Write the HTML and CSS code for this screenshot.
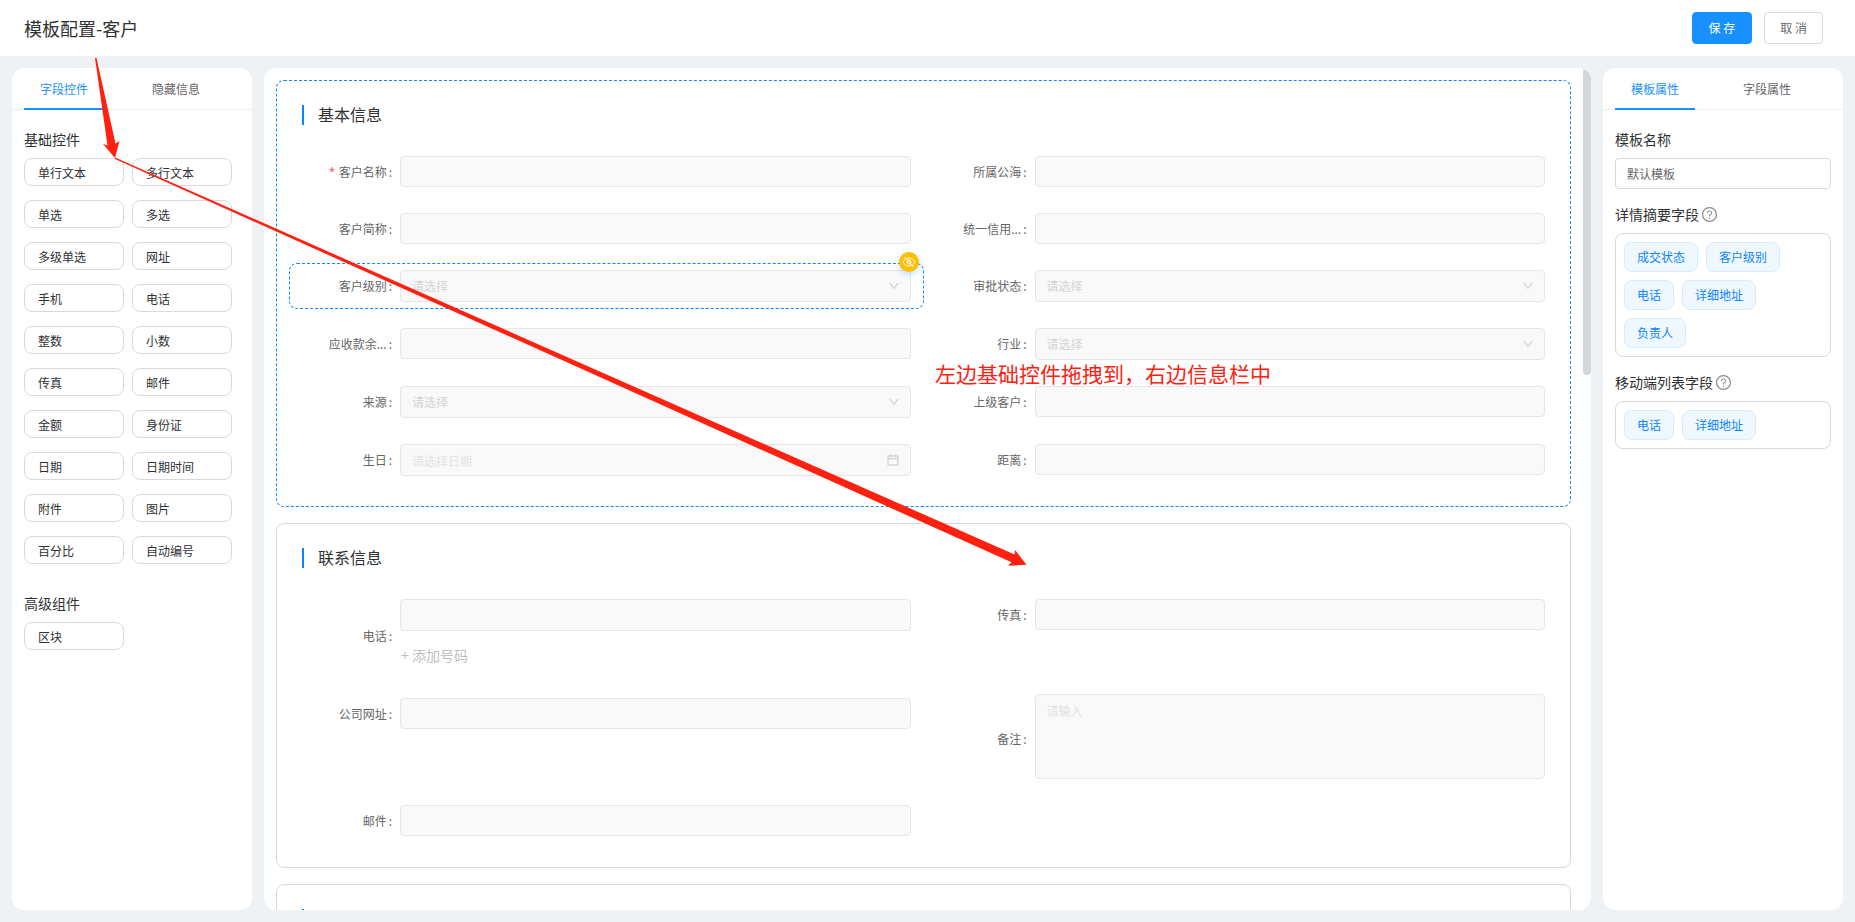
FILE: index.html
```html
<!DOCTYPE html>
<html lang="zh-CN">
<head>
<meta charset="utf-8">
<title>模板配置-客户</title>
<link rel="stylesheet" href="styles.css">
</head>
<body>
<svg class="defs" aria-hidden="true">
  <symbol id="down" viewBox="0 0 1024 1024"><path d="M884 256h-75c-5.1 0-9.9 2.5-12.9 6.6L512 654.2 227.9 262.6c-3-4.1-7.8-6.6-12.9-6.6h-75c-6.5 0-10.3 7.4-6.5 12.7l352.6 486.1c12.8 17.6 39 17.6 51.7 0l352.6-486.1c3.9-5.3.1-12.7-6.4-12.7z"/></symbol>
  <symbol id="calendar" viewBox="0 0 1024 1024"><path d="M880 184H712v-64c0-4.4-3.6-8-8-8h-56c-4.4 0-8 3.6-8 8v64H384v-64c0-4.4-3.6-8-8-8h-56c-4.4 0-8 3.6-8 8v64H144c-17.7 0-32 14.3-32 32v664c0 17.7 14.3 32 32 32h736c17.7 0 32-14.3 32-32V216c0-17.7-14.3-32-32-32zm-40 656H184V460h656v380zM184 392V256h128v48c0 4.4 3.6 8 8 8h56c4.4 0 8-3.6 8-8v-48h256v48c0 4.4 3.6 8 8 8h56c4.4 0 8-3.6 8-8v-48h128v136H184z"/></symbol>
  <symbol id="help" viewBox="64 64 896 896"><path d="M512 64C264.600 64 64 264.600 64 512s200.600 448 448 448 448-200.600 448-448S759.400 64 512 64zm0 820c-205.400 0-372-166.600-372-372s166.600-372 372-372 372 166.600 372 372-166.600 372-372 372z"/><path d="M623.6 316.700C593.600 290.400 554 276 512 276s-81.600 14.500-111.600 40.700C369.200 344 352 380.700 352 420v7.600c0 4.400 3.600 8 8 8h48c4.400 0 8-3.600 8-8V420c0-44.100 43.100-80 96-80s96 35.900 96 80c0 31.100-22 59.600-56.100 72.700-21.200 8.100-39.200 22.300-52.100 40.900-13.100 19-19.900 41.800-19.900 64.900V620c0 4.400 3.600 8 8 8h48c4.400 0 8-3.600 8-8v-22.700a48.300 48.300 0 0130.900-44.800c59-22.700 97.100-74.700 97.100-132.500.1-39.300-17.100-76-48.300-103.300zM472 732a40 40 0 1080 0 40 40 0 10-80 0z"/></symbol>
</svg>

<header class="topbar">
  <h1 class="page-title">模板配置-客户</h1>
  <div class="actions">
    <button type="button" class="btn btn-primary">保 存</button>
    <button type="button" class="btn">取 消</button>
  </div>
</header>

<main class="workspace">
  <aside class="panel side">
    <div class="tabs" role="tablist">
      <button type="button" class="tab active" role="tab" aria-selected="true">字段控件</button>
      <button type="button" class="tab" role="tab" aria-selected="false">隐藏信息</button>
    </div>
    <div class="side-body">
      <h2 class="side-title">基础控件</h2>
      <div class="chips">
        <button type="button" class="chip">单行文本</button><button type="button" class="chip">多行文本</button>
        <button type="button" class="chip">单选</button><button type="button" class="chip">多选</button>
        <button type="button" class="chip">多级单选</button><button type="button" class="chip">网址</button>
        <button type="button" class="chip">手机</button><button type="button" class="chip">电话</button>
        <button type="button" class="chip">整数</button><button type="button" class="chip">小数</button>
        <button type="button" class="chip">传真</button><button type="button" class="chip">邮件</button>
        <button type="button" class="chip">金额</button><button type="button" class="chip">身份证</button>
        <button type="button" class="chip">日期</button><button type="button" class="chip">日期时间</button>
        <button type="button" class="chip">附件</button><button type="button" class="chip">图片</button>
        <button type="button" class="chip">百分比</button><button type="button" class="chip">自动编号</button>
      </div>
      <h2 class="side-title advanced">高级组件</h2>
      <div class="chips">
        <button type="button" class="chip">区块</button>
      </div>
    </div>
  </aside>

  <section class="panel canvas">
    <div class="canvas-scroll">
      <section class="block selected">
        <h2 class="block-title">基本信息</h2>
        <div class="fields">
          <div class="field"><label class="label" for="f1"><span class="req">*</span>客户名称<span class="colon">:</span></label><div class="control"><input id="f1" class="input" type="text" disabled></div></div>
          <div class="field"><label class="label" for="f2">所属公海<span class="colon">:</span></label><div class="control"><input id="f2" class="input" type="text" disabled></div></div>
          <div class="field"><label class="label" for="f3">客户简称<span class="colon">:</span></label><div class="control"><input id="f3" class="input" type="text" disabled></div></div>
          <div class="field"><label class="label" for="f4">统一信用...<span class="colon">:</span></label><div class="control"><input id="f4" class="input" type="text" disabled></div></div>
          <div class="field current"><label class="label" for="f5">客户级别<span class="colon">:</span></label><div class="control"><select id="f5" class="input select" disabled><option>请选择</option></select><svg class="suffix"><use href="#down"/></svg></div>
            <span class="badge"><svg viewBox="0 0 14 14"><path d="M1 7C2.300 4.400 4.400 3 7 3s4.700 1.400 6 4c-1.300 2.600-3.400 4-6 4S2.300 9.600 1 7z"/><circle cx="7" cy="7" r="2"/><path d="M2.300 1.800 11.700 12.200"/></svg></span>
          </div>
          <div class="field"><label class="label" for="f6">审批状态<span class="colon">:</span></label><div class="control"><select id="f6" class="input select" disabled><option>请选择</option></select><svg class="suffix"><use href="#down"/></svg></div></div>
          <div class="field"><label class="label" for="f7">应收款余...<span class="colon">:</span></label><div class="control"><input id="f7" class="input" type="text" disabled></div></div>
          <div class="field"><label class="label" for="f8">行业<span class="colon">:</span></label><div class="control"><select id="f8" class="input select" disabled><option>请选择</option></select><svg class="suffix"><use href="#down"/></svg></div></div>
          <div class="field"><label class="label" for="f9">来源<span class="colon">:</span></label><div class="control"><select id="f9" class="input select" disabled><option>请选择</option></select><svg class="suffix"><use href="#down"/></svg></div></div>
          <div class="field"><label class="label" for="f10">上级客户<span class="colon">:</span></label><div class="control"><input id="f10" class="input" type="text" disabled></div></div>
          <div class="field"><label class="label" for="f11">生日<span class="colon">:</span></label><div class="control"><input id="f11" class="input tall" type="text" placeholder="请选择日期" disabled><svg class="suffix date"><use href="#calendar"/></svg></div></div>
          <div class="field"><label class="label" for="f12">距离<span class="colon">:</span></label><div class="control"><input id="f12" class="input" type="text" disabled></div></div>
        </div>
      </section>

      <section class="block">
        <h2 class="block-title">联系信息</h2>
        <div class="fields">
          <div class="field"><label class="label" for="g1">电话<span class="colon">:</span></label><div class="control"><input id="g1" class="input tall" type="text" disabled><button type="button" class="add">+ 添加号码</button></div></div>
          <div class="field"><label class="label" for="g2">传真<span class="colon">:</span></label><div class="control"><input id="g2" class="input" type="text" disabled></div></div>
          <div class="field"><label class="label" for="g3">公司网址<span class="colon">:</span></label><div class="control"><input id="g3" class="input" type="text" disabled></div></div>
          <div class="field"><label class="label" for="g4">备注<span class="colon">:</span></label><div class="control"><textarea id="g4" class="input area" placeholder="请输入" disabled></textarea></div></div>
          <div class="field"><label class="label" for="g5">邮件<span class="colon">:</span></label><div class="control"><input id="g5" class="input" type="text" disabled></div></div>
        </div>
      </section>

      <section class="block">
        <div class="block-title"></div>
      </section>
    </div>
    <div class="scrollbar"><div class="thumb"></div></div>
  </section>

  <aside class="panel side">
    <div class="tabs" role="tablist">
      <button type="button" class="tab active" role="tab" aria-selected="true">模板属性</button>
      <button type="button" class="tab" role="tab" aria-selected="false">字段属性</button>
    </div>
    <div class="side-body">
      <label class="side-title" for="tpl">模板名称</label>
      <input id="tpl" class="input editable" type="text" value="默认模板">
      <h2 class="side-title prop">详情摘要字段<svg class="help"><use href="#help"/></svg></h2>
      <div class="tags">
        <span class="tag">成交状态</span><span class="tag">客户级别</span><span class="tag">电话</span><span class="tag">详细地址</span><span class="tag">负责人</span>
      </div>
      <h2 class="side-title prop">移动端列表字段<svg class="help"><use href="#help"/></svg></h2>
      <div class="tags">
        <span class="tag">电话</span><span class="tag">详细地址</span>
      </div>
    </div>
  </aside>
</main>

<svg class="arrows" viewBox="95 58 932 510" aria-hidden="true">
  <path d="M95 58 96.500 58 115.500 143.500 119.500 141 115 158 103 144 107.500 145.500z"/>
  <path d="M115 157.500 1014.500 554.500 1015 550 1026.500 564.700 1008 565.700 1011.500 562.300 115 159z"/>
</svg>
<p class="note">左边基础控件拖拽到，右边信息栏中</p>
</body>
</html>
```
FILE: styles.css
```css
* {
  box-sizing: border-box;
}

body {
  position: relative;
  display: flex;
  flex-direction: column;
  height: 100vh;
  margin: 0;
  overflow: hidden;
  background: #eef2f5;
  color: #303133;
  font: 400 12px/20px "Noto Sans CJK SC", sans-serif;
}

h1, h2, p {
  margin: 0;
  font-weight: inherit;
}

button, input, select, textarea {
  margin: 0;
  font: inherit;
  color: inherit;
}

.defs {
  position: absolute;
  width: 0;
  height: 0;
}

.topbar {
  display: flex;
  flex: none;
  align-items: center;
  justify-content: space-between;
  height: 56px;
  padding: 0 32px 0 24px;
  background: #fff;
}

.page-title {
  font-size: 18px;
  line-height: 26px;
}

.actions {
  display: flex;
  gap: 12px;
}

.btn {
  height: 32px;
  padding: 0 15px;
  border: 1px solid #d9d9d9;
  border-radius: 4px;
  background: #fff;
  color: #666;
}

.btn-primary {
  padding: 0 16px;
  border-color: #1890ff;
  background: #1890ff;
  color: #fff;
}

.workspace {
  display: flex;
  flex: 1;
  gap: 12px;
  min-height: 0;
  padding: 12px;
}

.panel {
  border-radius: 12px;
  background: #fff;
  overflow: hidden;
}

.side {
  flex: none;
  width: 240px;
}

.tabs {
  display: flex;
  gap: 32px;
  height: 42px;
  padding: 0 12px;
  border-bottom: 1px solid #f0f0f0;
}

.tab {
  width: 80px;
  height: 42px;
  padding: 0;
  border: 0;
  background: none;
  color: #666;
}

.tab.active {
  padding-top: 2px;
  border-bottom: 2px solid #1890ff;
  color: #1890ff;
}

.side-body {
  padding: 20px 12px;
}

.side-title {
  display: flex;
  align-items: center;
  margin-bottom: 8px;
  padding-bottom: 2px;
  font-size: 14px;
  line-height: 18px;
}

.side-title.advanced {
  margin-top: 30px;
}

.side-title.prop {
  margin-top: 16px;
}

.chips {
  display: grid;
  grid-template-columns: repeat(2, 100px);
  gap: 14px 8px;
}

.chip {
  height: 28px;
  padding: 2px 13px 0;
  border: 1px solid #d9d9d9;
  border-radius: 8px;
  background: #fff;
  text-align: left;
}

.canvas {
  display: flex;
  flex: 1;
  min-width: 0;
}

.canvas-scroll {
  flex: 1;
  min-width: 0;
  padding: 12px;
  overflow: hidden;
}

.scrollbar {
  flex: none;
  width: 8px;
}

.thumb {
  height: 36%;
  min-height: 307px;
  border-radius: 4px;
  background: #d3d7da;
}

.block {
  padding: 24px 12px;
  margin-bottom: 16px;
  border: 1px solid #d9d9d9;
  border-radius: 8px;
}

.block.selected {
  padding-bottom: 23px;
  border: 1px dashed #1087ff;
}

.block-title {
  min-height: 20px;
  margin: 0 13px 24px;
  padding: 0 0 2px 14px;
  border-left: 2px solid #0a84ff;
  font-size: 16px;
  line-height: 18px;
}

.fields {
  display: grid;
  grid-template-columns: repeat(2, minmax(0, 1fr));
  align-items: start;
  row-gap: 12px;
}

.field {
  position: relative;
  display: flex;
  align-items: center;
  padding: 6px 12px 6px 11px;
  border: 1px solid transparent;
  border-radius: 8px;
}

.field.current {
  border: 1px dashed #1087ff;
}

.label {
  flex: none;
  width: 99px;
  padding-right: 8px;
  text-align: right;
  color: #666;
}

.req {
  margin-right: 4px;
  color: #ff4d4f;
  font-family: "Liberation Sans", sans-serif;
  font-size: 14px;
  line-height: 1;
}

.colon {
  margin-left: 2px;
}

.control {
  display: grid;
  flex: 1;
  min-width: 0;
}

.input {
  display: block;
  width: 100%;
  height: 31px;
  padding: 0 11px;
  border: 1px solid #e6e6e6;
  border-radius: 4px;
  background: #f9f9f9;
  outline: 0;
}

.input::placeholder {
  color: #e3e3e3;
  opacity: 1;
}

.input.tall {
  height: 32px;
}

.select {
  grid-area: 1 / 1;
  height: 32px;
  appearance: none;
  color: #d3d3d3;
  opacity: 1;
}

.area {
  height: 85px;
  margin-top: -4px;
  padding: 6px 11px;
  resize: none;
}

.suffix {
  grid-area: 1 / 1;
  place-self: center end;
  width: 12px;
  height: 12px;
  margin-right: 11px;
  fill: #c8c8c8;
  pointer-events: none;
}

.suffix.date {
  width: 14px;
  height: 14px;
}

.input.tall:first-child {
  grid-area: 1 / 1;
}

.add {
  justify-self: start;
  height: 20px;
  margin: 14px 0 7px;
  padding: 0 1px;
  border: 0;
  background: none;
  font-size: 14px;
  color: #bfbfbf;
}

.badge {
  position: absolute;
  top: -12px;
  right: 4px;
  display: grid;
  place-items: center;
  width: 20px;
  height: 20px;
  border-radius: 50%;
  background: #ffbf00;
  box-shadow: 0 2px 6px rgba(24, 144, 255, 0.3);
}

.badge svg {
  width: 14px;
  height: 14px;
  fill: none;
  stroke: #fff;
  stroke-width: 1;
}

.input.editable {
  border-color: #d9d9d9;
  background: #fff;
  color: #666;
}

.help {
  width: 15px;
  height: 15px;
  margin-left: 3px;
  fill: #8c8c8c;
}

.tags {
  display: flex;
  flex-wrap: wrap;
  gap: 8px;
  padding: 8px;
  border: 1px solid #d9d9d9;
  border-radius: 8px;
}

.tag {
  padding: 4px 12px;
  border: 1px solid #d9ecff;
  border-radius: 8px;
  background: #f0f8ff;
  color: #0a84ff;
}

.arrows {
  position: absolute;
  top: 58px;
  left: 95px;
  width: 932px;
  height: 510px;
  fill: #ff2010;
  pointer-events: none;
}

.note {
  position: absolute;
  top: 357px;
  left: 935px;
  font-size: 21px;
  line-height: 32px;
  color: #ff2010;
  white-space: nowrap;
}
```
